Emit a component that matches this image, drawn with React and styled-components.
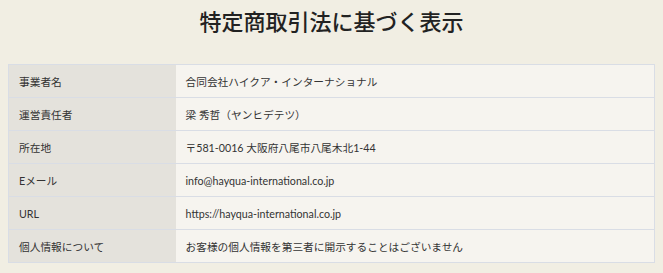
import React from 'react';
import styled, { createGlobalStyle } from 'styled-components';

const GlobalStyle = createGlobalStyle`
  html, body {
    margin: 0;
    padding: 0;
    background: #f1eee3;
  }
  body {
    font-family: Lato, "Noto Sans CJK JP", sans-serif;
    color: #333;
  }
`;

const Page = styled.div`
  width: 663px;
  height: 273px;
  padding: 0 8px;
  box-sizing: border-box;
  overflow: hidden;
`;

const Title = styled.h1`
  margin: 0;
  padding-top: 5px;
  height: 59px;
  text-align: center;
  font-family: "Noto Sans CJK JP", sans-serif;
  font-size: 22px;
  font-weight: 500;
  line-height: 30px;
  color: #222;
`;

const Table = styled.table`
  width: 647px;
  border-collapse: collapse;
  border: 1px solid #d9dde5;
`;

const Row = styled.tr`
  height: 33px;
`;

const Label = styled.th`
  width: 167px;
  padding: 0 0 0 10px;
  box-sizing: border-box;
  background: #e4e2dc;
  border-bottom: 1px solid #d9dde5;
  text-align: left;
  font-weight: 400;
  font-size: 10.7px;
  color: #333;
`;

const Value = styled.td`
  padding: 0 0 0 10px;
  background: #f6f4ef;
  border-bottom: 1px solid #d9dde5;
  font-size: 10.7px;
  color: #333;
`;

const rows = [
  ['事業者名', '合同会社ハイクア・インターナショナル'],
  ['運営責任者', '梁 秀哲（ヤンヒデテツ）'],
  ['所在地', '〒581-0016 大阪府八尾市八尾木北1-44'],
  ['Eメール', 'info@hayqua-international.co.jp'],
  ['URL', 'https://hayqua-international.co.jp'],
  ['個人情報について', 'お客様の個人情報を第三者に開示することはございません'],
];

const App = () => (
  <>
    <GlobalStyle />
    <Page>
      <Title>特定商取引法に基づく表示</Title>
      <Table>
        <tbody>
          {rows.map(([k, v]) => (
            <Row key={k}>
              <Label>{k}</Label>
              <Value>{v}</Value>
            </Row>
          ))}
        </tbody>
      </Table>
    </Page>
  </>
);

export default App;
